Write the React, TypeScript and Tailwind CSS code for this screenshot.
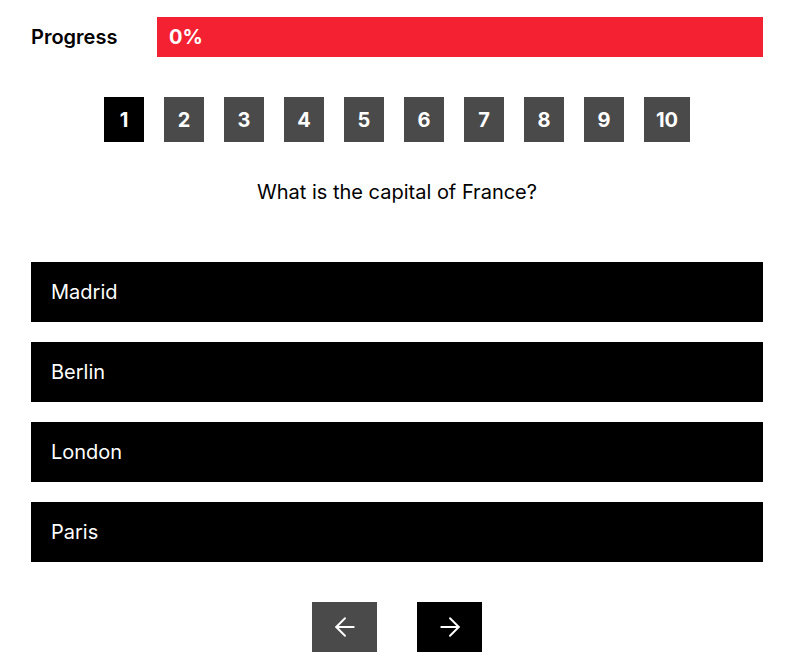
import { ArrowLeft, ArrowRight } from "lucide-react";

const answers = ["Madrid", "Berlin", "London", "Paris"];

const App = () => {
    const pages = [1, 2, 3, 4, 5, 6, 7, 8, 9, 10];
    const current = 1;
    return (
        <div className="w-[806px] h-[664px] bg-white font-['Inter',sans-serif] text-black">
            <div className="w-[732px] ml-[31px] pt-[17px]">
                {/* progress */}
                <div className="flex items-center h-10">
                    <span className="w-[126px] text-xl font-semibold">Progress</span>
                    <div className="flex-1 h-10 bg-[#f42132] flex items-center px-3">
                        <span className="text-white text-xl font-bold">0%</span>
                    </div>
                </div>

                {/* question numbers */}
                <div className="flex justify-center gap-5 mt-10">
                    {pages.map((p) => (
                        <div
                            key={p}
                            className={`h-[45px] ${p === 10 ? "w-[46px]" : "w-10"} flex items-center justify-center text-white text-xl font-bold ${p === current ? "bg-black" : "bg-[#4a4a4a]"}`}
                        >
                            {p}
                        </div>
                    ))}
                </div>

                <p className="text-center text-xl mt-[36px] leading-[28px]">What is the capital of France?</p>

                <div className="flex flex-col gap-5 mt-[56px]">
                    {answers.map((a) => (
                        <div key={a} className="h-[60px] bg-black text-white text-xl flex items-center px-5">
                            {a}
                        </div>
                    ))}
                </div>

                <div className="flex justify-center gap-10 mt-10">
                    <button className="w-[65px] h-[50px] bg-[#4a4a4a] flex items-center justify-center text-white">
                        <ArrowLeft size={30} strokeWidth={1.5} />
                    </button>
                    <button className="w-[65px] h-[50px] bg-black flex items-center justify-center text-white">
                        <ArrowRight size={30} strokeWidth={1.5} />
                    </button>
                </div>
            </div>
        </div>
    );
};

export default App;
